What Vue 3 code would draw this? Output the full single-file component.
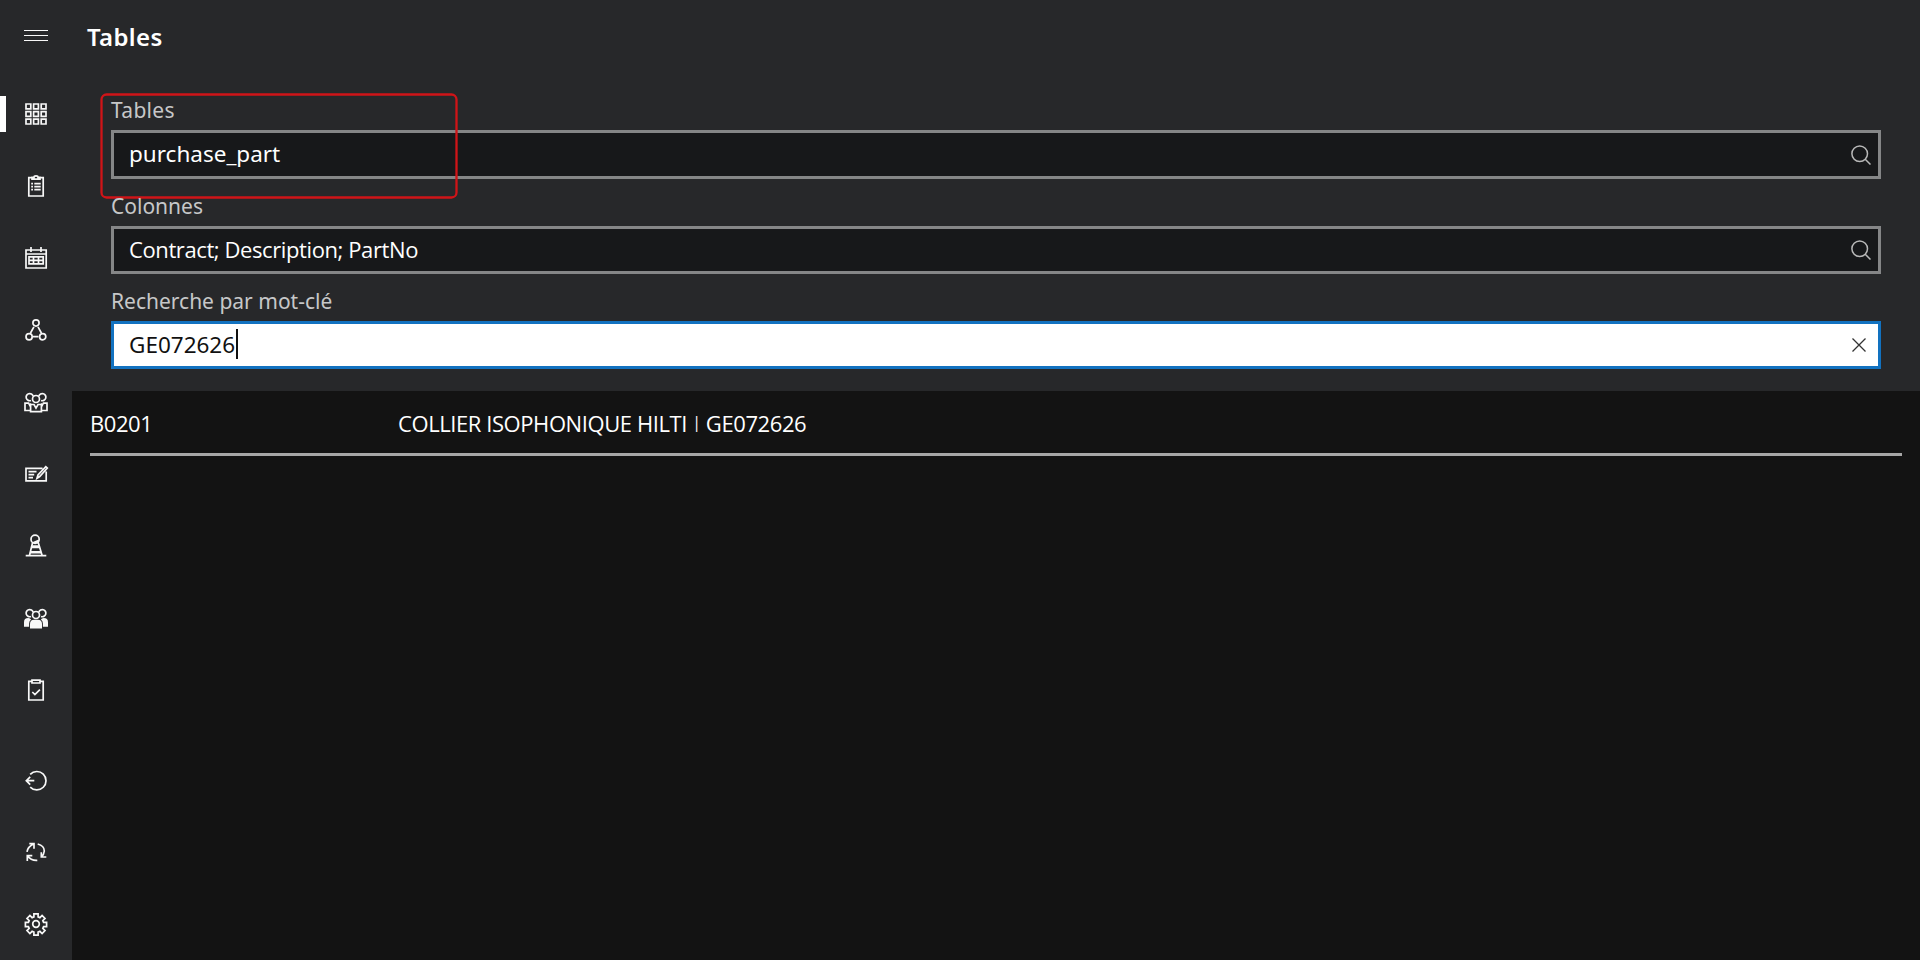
<template>
  <div class="app">
    <nav class="sidebar">
      <button class="nav-item menu" aria-label="Menu">
        <svg class="icon thin" viewBox="0 0 32 32"><path d="M4 10.5h24M4 15.5h24M4 20.5h24" /></svg>
      </button>

      <div class="nav-main">
        <button v-for="item in mainItems" :key="item.name" :class="['nav-item', { active: item.name === current }]" :aria-label="item.name">
          <svg class="icon" viewBox="0 0 32 32">
            <path v-if="item.line" :d="item.line" />
            <path v-if="item.fill" class="solid" :d="item.fill" />
          </svg>
        </button>
      </div>

      <div class="nav-footer">
        <button v-for="item in footerItems" :key="item.name" class="nav-item" :aria-label="item.name">
          <svg class="icon" viewBox="0 0 32 32"><path :d="item.line" /></svg>
        </button>
      </div>
    </nav>

    <main class="content">
      <header class="header"><h1>Tables</h1></header>

      <section class="form">
        <div class="field">
          <label class="wide">Tables</label>
          <div class="input tall">
            <span class="value">purchase_part</span>
            <svg class="search" viewBox="0 0 20 20"><circle cx="8.7" cy="8.7" r="7.8" /><path d="M14.2 14.2l5.3 5.3" /></svg>
          </div>
          <svg class="highlight" viewBox="0 0 360 108"><rect x="2.5" y="2.5" width="355" height="103" rx="5" /></svg>
        </div>

        <div class="field">
          <label>Colonnes</label>
          <div class="input">
            <span class="value columns">Contract; Description; PartNo</span>
            <svg class="search" viewBox="0 0 20 20"><circle cx="8.7" cy="8.7" r="7.8" /><path d="M14.2 14.2l5.3 5.3" /></svg>
          </div>
        </div>

        <div class="field">
          <label>Recherche par mot-clé</label>
          <div class="input focused">
            <span class="value">GE072626</span>
            <span class="caret"></span>
            <svg class="clear" viewBox="0 0 14 14"><path d="M.5 .5l13 13M13.5 .5l-13 13" /></svg>
          </div>
        </div>
      </section>

      <section class="results">
        <div v-for="row in rows" :key="row.contract" class="row">
          <span class="contract">{{ row.contract }}</span>
          <span class="description">{{ row.description }} <span class="bar">|</span> {{ row.partNo }}</span>
        </div>
      </section>
    </main>
  </div>
</template>

<script setup>
import { ref } from 'vue';

const current = ref('Tables');

const mainItems = [
  {
    name: 'Tables',
    line: 'M6 6h4.8v4.8H6zM13.6 6h4.8v4.8h-4.8zM21.2 6H26v4.8h-4.8zM6 13.6h4.8v4.8H6zM13.6 13.6h4.8v4.8h-4.8zM21.2 13.6H26v4.8h-4.8zM6 21.2h4.8V26H6zM13.6 21.2h4.8V26h-4.8zM21.2 21.2H26V26h-4.8z'
  },
  {
    name: 'List',
    line: 'M12 7.7H8.8V26h14.4V7.7H20M12 9.2V7.3h2a2 1.5 0 0 1 4 0h2v1.9zM11.2 13.7h1.8M11.2 16.7h1.8M11.2 19.7h1.8M14.3 13.7h6.4M14.3 16.7h6.4M14.3 19.7h6.4'
  },
  {
    name: 'Calendar',
    line: 'M6 8h20.2v18H6zM6 12h20.2M11 5v5M21 5v5M9 14.8h14.2v7H9zM9 18.3h14.2M13.5 14.8v7M18.5 14.8v7'
  },
  {
    name: 'Network',
    line: 'M12.9 9a3.1 3.1 0 1 0 6.2 0a3.1 3.1 0 1 0-6.2 0M6 22.7a3.1 3.1 0 1 0 6.2 0a3.1 3.1 0 1 0-6.2 0M19.6 22.7a3.1 3.1 0 1 0 6.2 0a3.1 3.1 0 1 0-6.2 0M13.9 12.8l-3.4 6.2M18 12.8l3.4 6.2M13 22.7h5.4'
  },
  {
    name: 'Groups',
    line: 'M11 14.5a3.6 3.6 0 1 1 2.2-4.3M21 14.5a3.6 3.6 0 1 0-2.2-4.3M12.5 13a3.5 3.5 0 1 0 7 0a3.5 3.5 0 1 0-7 0M10.5 24.5H5v-7.3h3.6l1.2 2.2 1.4-2M21.5 24.5H27v-7.3h-3.6l-1.2 2.2-1.4-2M14 18.5h-3.4v7.2h10.8v-7.2H18l-2 3.6z'
  },
  {
    name: 'Edit',
    line: 'M22.5 10.3H6v12.6h20.2V13.5M8.5 13.7h8M8.5 16.7h5.7M8.5 19.7h4.5M17 20.3l1-3.4 7.8-8.3 1.5 1.4-7.6 8.5z'
  },
  {
    name: 'Site',
    line: 'M11 9.3a4.1 4.1 0 1 0 8.2 0a4.1 4.1 0 1 0-8.2 0M5.7 25.7h20.6M12.6 12.5L9.6 25M18.2 12.5L22 25M12 13.2l7-3',
    fill: 'M12 15.2h7.2l.8 3.1h-9zM10.2 21h10.6l.8 2.6H9.6z'
  },
  {
    name: 'Teams',
    line: 'M11 14.5a3.6 3.6 0 1 1 2.2-4.3M21 14.5a3.6 3.6 0 1 0-2.2-4.3M12.5 13a3.5 3.5 0 1 0 7 0a3.5 3.5 0 1 0-7 0',
    fill: 'M4 24.7v-4.5q0-4.2 4.3-4.2 2 0 2.8 1.5-2 1.5-2 4v3.2zM28 24.7v-4.5q0-4.2-4.3-4.2-2 0-2.8 1.5 2 1.5 2 4v3.2zM10 26.5v-4.4q0-4.4 4.2-4.4h3.6q4.2 0 4.2 4.4v4.4z'
  },
  {
    name: 'Tasks',
    line: 'M12 7.3H8.8V26h14.4V7.3H20M12 9V6.2h8V9zM12.3 18l2.6 2.6 5-5'
  }
];

const footerItems = [
  { name: 'Sign out', line: 'M10.2 10.3a9.2 9.2 0 1 1 0 12.8M14.3 16.7H6.3M10.2 12.8l-3.9 3.9 3.9 3.9' },
  { name: 'Sync', line: 'M7 15.8Q7.7 10.5 14 7.7M9.3 7.7H14v5M17.7 8Q24.3 9.7 24.3 15 24 18.7 21.3 21M21.3 16.3V21h5M17.3 24.3Q11 24.7 7.3 19.7M7.3 25v-5.3h5' },
  {
    name: 'Settings',
    line: 'M13.9 5.8h4.2v3.1l1.8.8 2.2-2.2 2.9 2.9-2.2 2.2.8 1.8h3v4.2h-3l-.8 1.8 2.2 2.2-2.9 2.9-2.2-2.2-1.8.8v3h-4.2v-3l-1.8-.8-2.2 2.2L7 22.6l2.2-2.2-.8-1.8h-3v-4.2h3l.8-1.8L7 10.4l2.9-2.9 2.2 2.2 1.8-.8zM12.7 16a3.3 3.3 0 1 0 6.6 0a3.3 3.3 0 1 0-6.6 0'
  }
];

const rows = [
  { contract: 'B0201', description: 'COLLIER ISOPHONIQUE HILTI', partNo: 'GE072626' }
];
</script>

<style>
body {
  margin: 0;
  background-color: #27282a;
}
</style>

<style scoped>
.app {
  display: flex;
  height: 960px;
  overflow: hidden;
  background-color: #27282a;
  color: #fff;
  font-family: "Noto Sans", "Open Sans", sans-serif;
  font-size: 22px;
}

.sidebar {
  display: flex;
  flex-direction: column;
  flex: none;
  width: 72px;
}

.nav-item {
  display: flex;
  align-items: center;
  justify-content: center;
  width: 72px;
  height: 72px;
  padding: 0;
  border: 0;
  background: none;
}

.nav-item.active {
  background: linear-gradient(#fff, #fff) 0 18px / 6px 36px no-repeat;
}

.nav-main {
  margin-top: 6px;
}

.nav-footer {
  margin-top: auto;
}

.icon {
  width: 32px;
  height: 32px;
  fill: none;
  stroke: #f8f8f8;
  stroke-width: 1.7;
}

.icon.thin {
  stroke-width: 1;
}

.icon .solid {
  fill: #f8f8f8;
  stroke: none;
}

.content {
  display: flex;
  flex: 1;
  flex-direction: column;
}

.header {
  height: 95px;
  padding-left: 15px;
}

h1 {
  margin: 0;
  font-size: 24px;
  font-weight: 600;
  letter-spacing: 0.35px;
  line-height: 74px;
}

.form {
  display: flex;
  flex-direction: column;
  gap: 12px;
  padding: 0 39px 22px;
}

.field {
  position: relative;
}

label {
  display: block;
  padding-bottom: 4px;
  color: #c6c7c8;
  font-size: 21px;
  line-height: 31px;
}

label.wide {
  letter-spacing: 0.3px;
}

.input {
  display: flex;
  align-items: center;
  box-sizing: border-box;
  height: 48px;
  padding: 0 7px 0 15px;
  border: 3px solid #858687;
  background-color: #17181a;
}

.input.tall {
  height: 49px;
}

.input.focused {
  padding-right: 12px;
  border-color: #1272c0;
  background-color: #fff;
  color: #111;
}

.value {
  font-size: 22.5px;
  line-height: 30px;
  white-space: pre;
}

.tall .value {
  margin-bottom: 2px;
}

.value.columns {
  margin-bottom: 2px;
  font-family: "Open Sans", sans-serif;
  font-size: 22px;
  letter-spacing: -0.4px;
}

.search {
  width: 20px;
  height: 20px;
  margin-left: auto;
  fill: none;
  stroke: #b8b8b8;
  stroke-width: 1.5;
}

.clear {
  width: 14px;
  height: 14px;
  margin-left: auto;
  stroke: #333;
  stroke-width: 1.3;
}

.caret {
  width: 2px;
  height: 30px;
  margin: 0 0 2px 1px;
  background-color: #111;
}

/* red frame drawn over the first field */
.highlight {
  position: absolute;
  top: -3px;
  left: -12px;
  width: 360px;
  height: 108px;
  fill: none;
  stroke: #d01418;
  stroke-width: 2.3;
}

.results {
  flex: 1;
  padding: 0 18px;
  background-color: #131313;
}

.row {
  display: flex;
  box-sizing: border-box;
  height: 65px;
  border-bottom: 3px solid #a6a6a6;
  font-family: "Open Sans", sans-serif;
  letter-spacing: -0.42px;
  line-height: 64px;
  white-space: pre;
}

.contract {
  width: 308px;
}

.bar {
  font-size: 16px;
  vertical-align: 4px;
  line-height: 1;
}
</style>
